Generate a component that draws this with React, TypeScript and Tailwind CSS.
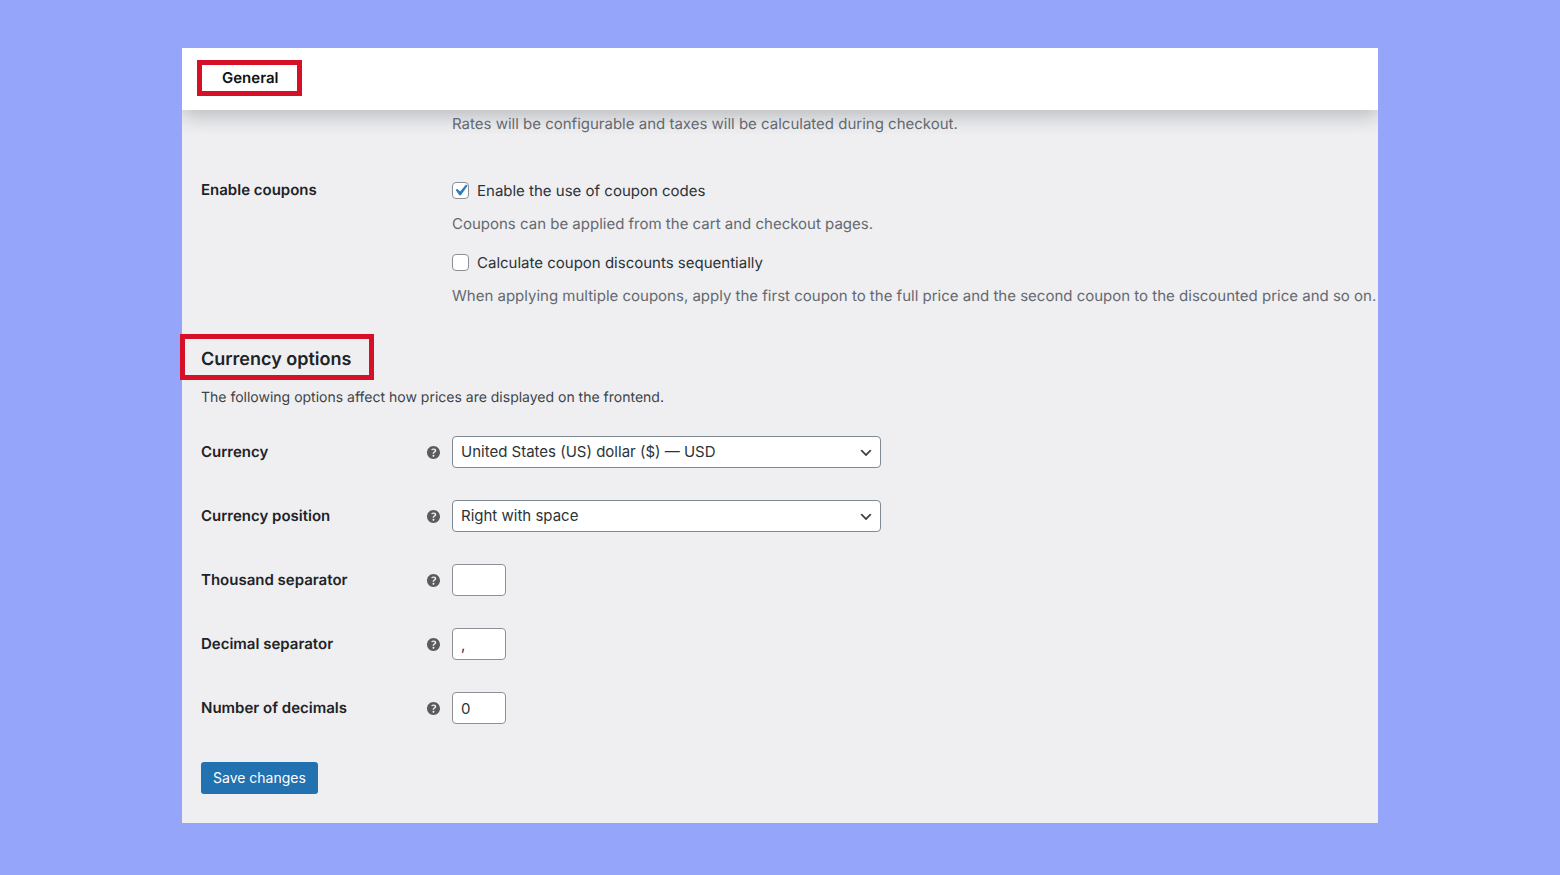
import type { ReactNode } from "react";

const HELP_PATH =
  "M17 10c0-3.87-3.14-7-7-7-3.87 0-7 3.13-7 7s3.13 7 7 7c3.86 0 7-3.13 7-7zm-6.3 1.48H9.14v-.43c0-.38.08-.7.24-.98s.46-.57.88-.89c.41-.29.68-.53.81-.71.14-.18.2-.39.2-.62 0-.25-.09-.44-.28-.58-.19-.13-.45-.19-.79-.19-.58 0-1.25.19-2 .57l-.64-1.28c.87-.49 1.8-.74 2.77-.74.81 0 1.45.2 1.92.58.48.39.71.91.71 1.55 0 .43-.09.8-.29 1.11-.19.32-.57.67-1.11 1.06-.38.28-.61.49-.71.63-.1.15-.15.34-.15.57v.35zm-1.47 2.74c-.18-.17-.27-.42-.27-.73 0-.33.08-.58.26-.75s.43-.25.77-.25c.32 0 .57.09.75.26s.27.42.27.74c0 .3-.09.55-.27.72-.18.18-.43.27-.75.27-.33 0-.58-.09-.76-.26z";

function HelpIcon() {
  return (
    <svg viewBox="3 3 14 14" className="size-[13px] fill-[#5b5b5b]" aria-hidden="true">
      <path d={HELP_PATH} />
    </svg>
  );
}

function Field({ id, label, children }: { id: string; label: string; children: ReactNode }) {
  return (
    <div className="grid grid-cols-[226px_25px_1fr] items-center">
      <label htmlFor={id} className="font-semibold text-[#1d2327]">
        {label}
      </label>
      <HelpIcon />
      {children}
    </div>
  );
}

function SelectField({ id, label, options }: { id: string; label: string; options: string[] }) {
  return (
    <Field id={id} label={label}>
      <div className="relative max-w-[429px]">
        <select
          id={id}
          className="h-8 w-full appearance-none rounded border border-[#7e8993] bg-white pr-8 pl-2 text-[#2c3338]"
        >
          {options.map((option) => (
            <option key={option}>{option}</option>
          ))}
        </select>
        <svg
          viewBox="0 0 20 20"
          className="pointer-events-none absolute top-[9px] right-[7px] size-4 fill-[#3c3c3c]"
          aria-hidden="true"
        >
          <path d="M5 6l5 5 5-5 2 1-7 7-7-7 2-1z" />
        </svg>
      </div>
    </Field>
  );
}

function TextField({ id, label, value }: { id: string; label: string; value: string }) {
  return (
    <Field id={id} label={label}>
      <input
        id={id}
        type="text"
        defaultValue={value}
        className="h-8 w-[54px] rounded border border-[#8c8f94] bg-white px-2 text-[#2c3338]"
      />
    </Field>
  );
}

function CheckField({
  label,
  description,
  checked,
}: {
  label: string;
  description: string;
  checked?: boolean;
}) {
  return (
    <div className="flex flex-col gap-[13px]">
      <label className="flex items-start gap-2 text-[#2c3338]">
        <span className="relative mt-px flex">
          <input
            type="checkbox"
            defaultChecked={checked}
            className="peer size-[17px] appearance-none rounded border border-[#8c8f94] bg-white"
          />
          <svg
            viewBox="0 0 20 20"
            className="pointer-events-none absolute -top-[3px] -left-[3px] hidden size-[23px] fill-[#2a7bc4] peer-checked:block"
            aria-hidden="true"
          >
            <path d="M14.83 4.89l1.34.94-5.81 8.38H9.02L5.78 9.67l1.34-1.25 2.57 2.4z" />
          </svg>
        </span>
        {label}
      </label>
      <p className="text-[#646970] lg:whitespace-nowrap">{description}</p>
    </div>
  );
}

export default function App() {
  return (
    <div className="min-h-screen bg-[#95a5f9] py-12 font-['Inter','Liberation_Sans',sans-serif] text-[15px] leading-5 antialiased [text-rendering:geometricPrecision]">
      <main className="mx-auto max-w-[1196px] bg-[#efeff1]">
        <div className="overflow-clip">
          <header className="flex bg-white px-[15px] pt-3 pb-3.5 shadow-[0_6px_20px_rgba(44,51,56,0.28)]">
            <a
              href="#general"
              className="border-5 border-[#d51027] py-[3px] pr-[18px] pl-5 font-semibold text-[#101214]"
            >
              General
            </a>
          </header>
          <div className="relative pt-1 pl-[270px]">
            <p className="text-[#646970]">
              Rates will be configurable and taxes will be calculated during checkout.
            </p>
          </div>
        </div>

        <form className="px-[19px] pt-[47px] pb-[29px]" onSubmit={(event) => event.preventDefault()}>
          <fieldset className="grid grid-cols-[251px_1fr]">
            <legend className="contents">
              <span className="leading-[18px] font-semibold text-[#1d2327]">Enable coupons</span>
            </legend>
            <div className="flex flex-col gap-[19px]">
              <CheckField
                label="Enable the use of coupon codes"
                description="Coupons can be applied from the cart and checkout pages."
                checked
              />
              <CheckField
                label="Calculate coupon discounts sequentially"
                description="When applying multiple coupons, apply the first coupon to the full price and the second coupon to the discounted price and so on."
              />
            </div>
          </fieldset>

          <h2 className="relative mt-[42px] w-fit text-lg leading-6 font-semibold text-[#1d2327]">
            Currency options
            <span className="pointer-events-none absolute -top-3.5 -right-[23px] -bottom-2 -left-[21px] border-5 border-[#d51027]" />
          </h2>
          <p className="mt-4 text-sm leading-5 text-[#3c434a]">
            The following options affect how prices are displayed on the frontend.
          </p>

          <div className="mt-7 flex flex-col gap-8">
            <SelectField
              id="currency"
              label="Currency"
              options={["United States (US) dollar ($) — USD", "Euro (€) — EUR"]}
            />
            <SelectField
              id="currency-position"
              label="Currency position"
              options={["Right with space", "Left", "Right", "Left with space"]}
            />
            <TextField id="thousand-separator" label="Thousand separator" value="" />
            <TextField id="decimal-separator" label="Decimal separator" value="," />
            <TextField id="decimals" label="Number of decimals" value="0" />
          </div>

          <button
            type="submit"
            className="mt-[38px] h-8 rounded-[3px] bg-[#2271b1] px-3 text-sm text-white"
          >
            Save changes
          </button>
        </form>
      </main>
    </div>
  );
}
